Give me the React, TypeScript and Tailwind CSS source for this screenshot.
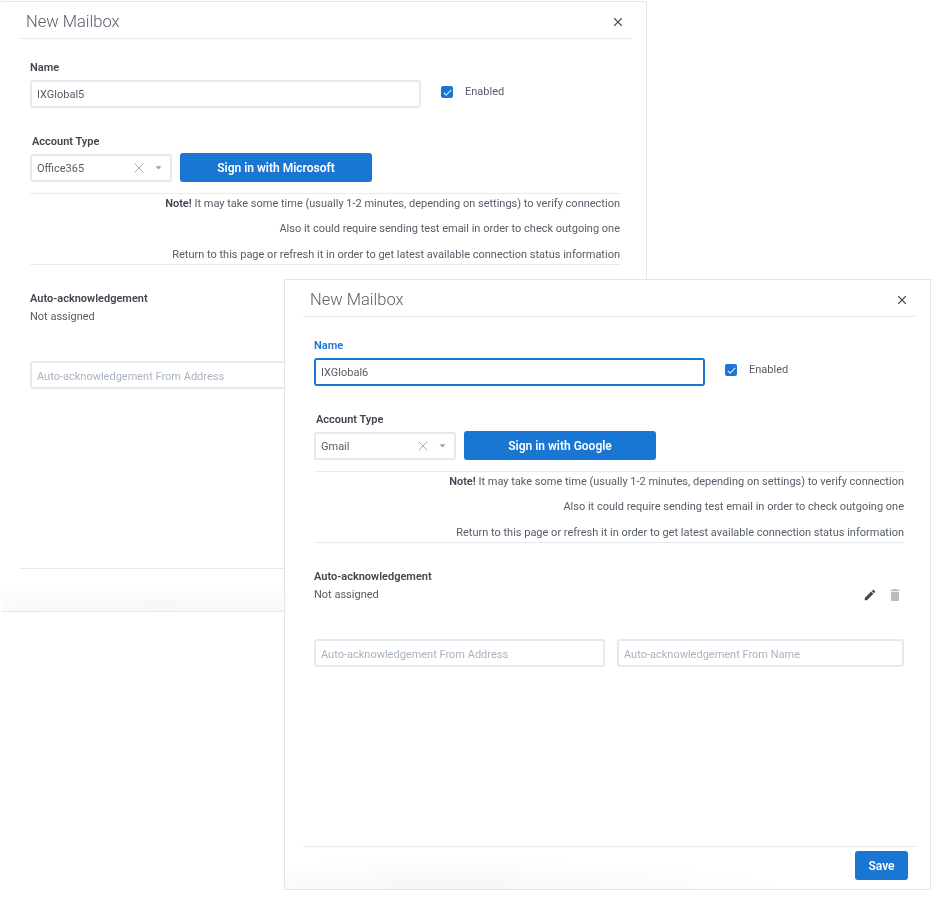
import React from "react";
import { X } from "lucide-react";
import { MdArrowDropDown, MdCheck, MdDelete, MdEdit } from "react-icons/md";

type MailboxProps = {
	name: string;
	accountType: string;
	provider: string;
	focused?: boolean;
	className: string;
};

const inputClass =
	"h-[28px] rounded-[3px] border-2 bg-white px-[5px] text-[11px] text-[#555d67] outline-none placeholder:text-[#a9b3bf]";

const notes = [
	<>
		<b className="font-semibold text-[#3f4650]">Note!</b> It may take some time (usually 1-2 minutes, depending on settings) to verify connection
	</>,
	<>Also it could require sending test email in order to check outgoing one</>,
	<>Return to this page or refresh it in order to get latest available connection status information</>,
];

const MailboxWindow = ({ name, accountType, provider, focused, className }: MailboxProps) => {
	return (
		<div className={`absolute flex flex-col bg-white ${className}`}>
			{/* Header */}
			<div className="ml-[18px] mr-[14px] flex h-[37px] shrink-0 items-center justify-between border-b border-[#e8ebf0] pl-[7px] pr-[7px] pt-[4px]">
				<span className="text-[16.5px] font-light text-[#59616b]">New Mailbox</span>
				<X size={14} strokeWidth={2} className="text-[#4a515b]" />
			</div>

			{/* Body */}
			<div className="flex flex-1 flex-col pl-[29px] pr-[26px] pt-[21px]">
				<label className={`text-[11px] font-semibold leading-[16px] ${focused ? "text-[#1976d2]" : "text-[#3f4650]"}`}>
					Name
				</label>
				<div className="mt-[4px] flex">
					<input
						readOnly
						value={name}
						className={`${inputClass} w-[391px] ${focused ? "border-[#1976d2]" : "border-[#e6e9ee]"}`}
					/>
					<div className="ml-[20px] flex h-[24px] items-center">
						<span className="flex h-[12px] w-[12px] items-center justify-center rounded-[2px] bg-[#1976d2]">
							<MdCheck size={11} className="text-white" />
						</span>
						<span className="ml-[12px] text-[11px] text-[#555d67]">Enabled</span>
					</div>
				</div>

				<label className="mt-[26px] pl-[2px] text-[11px] font-semibold leading-[16px] text-[#3f4650]">
					Account Type
				</label>
				<div className="mt-[3px] flex items-center">
					<div className="flex h-[28px] w-[142px] items-center rounded-[3px] border-2 border-[#e6e9ee] pl-[5px] pr-[4px] text-[11px] text-[#555d67]">
						<span className="flex-1 pt-[3px]">{accountType}</span>
						<X size={16} strokeWidth={1.4} className="text-[#98a4b2]" />
						<MdArrowDropDown size={15} className="ml-[4px] text-[#98a4b2]" />
					</div>
					<button className="ml-[8px] h-[29px] w-[192px] rounded-[3px] bg-[#1976d2] text-[12px] font-semibold text-white">
						Sign in with {provider}
					</button>
				</div>

				<div className="mt-[11px] flex flex-col gap-[7.25px] border-y border-[#e8ebf0] pt-[1px] text-right text-[11px] leading-[18px] text-[#555d67]">
					{notes.map((note, i) => (
						<p key={i}>{note}</p>
					))}
				</div>

				<label className="mt-[26.5px] text-[11px] font-semibold leading-[16px] text-[#3f4650]">
					Auto-acknowledgement
				</label>
				<div className="mt-[2px] flex h-[16px] items-center justify-between pr-[1px] text-[11px] text-[#555d67]">
					<span>Not assigned</span>
					<div className="flex items-center gap-[10px]">
						<MdEdit size={14} className="text-[#3f4650]" />
						<MdDelete size={16} className="text-[#b9bcc0]" />
					</div>
				</div>

				<div className="mt-[36px] flex gap-[12px]">
					<input readOnly placeholder="Auto-acknowledgement From Address" className={`${inputClass} w-[291px] border-[#e6e9ee] pt-[2px]`} />
					<input readOnly placeholder="Auto-acknowledgement From Name" className={`${inputClass} flex-1 border-[#e6e9ee] pt-[2px]`} />
				</div>
			</div>

			{/* Footer */}
			<div className="flex h-[43px] shrink-0 flex-col bg-[radial-gradient(ellipse_340px_30px_at_25%_100%,#f5f6f7,#ffffff)]">
				<div className="ml-[18px] mr-[14px] flex justify-end border-t border-[#e8ebf0] pr-[8px] pt-[4px]">
					<button className="h-[29px] w-[53px] rounded-[3px] bg-[#1976d2] text-[12px] font-semibold text-white">
						Save
					</button>
				</div>
			</div>
		</div>
	);
};

const App = () => {
	return (
		<div className="relative h-[899px] w-[941px] overflow-hidden bg-white font-['Roboto',sans-serif] blur-[0.35px]">
			<MailboxWindow
				name="IXGlobal5"
				accountType="Office365"
				provider="Microsoft"
				className="left-[1px] top-[1px] h-[611px] w-[646px] border-y border-r border-[#e4e8ee]"
			/>
			<MailboxWindow
				name="IXGlobal6"
				accountType="Gmail"
				provider="Google"
				focused
				className="left-[284px] top-[279px] h-[611px] w-[647px] border border-[#dfe5ec]"
			/>
		</div>
	);
};

export default App;
